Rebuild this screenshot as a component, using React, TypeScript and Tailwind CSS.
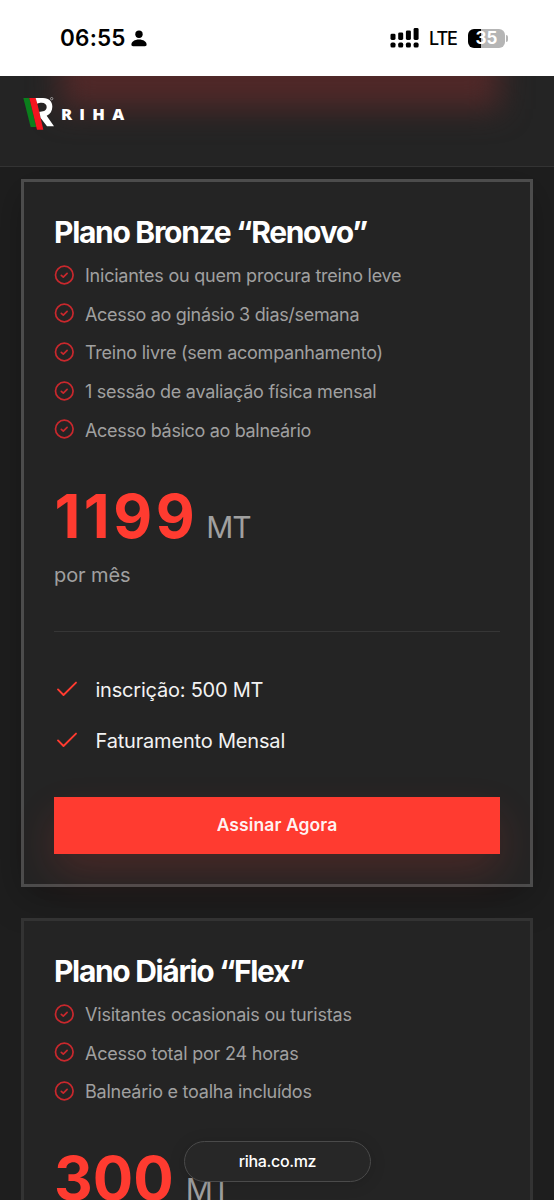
import { ReactNode } from "react";

interface Feature {
    text: string;
    tracking: string;
}

interface PlanCardProps {
    title: string;
    titleClass: string;
    features: Feature[];
    price: string;
    priceClass: string;
    period: string;
    highlighted?: boolean;
    children?: ReactNode;
}

const bronzeFeatures: Feature[] = [
    { text: "Iniciantes ou quem procura treino leve", tracking: "tracking-[-0.23px]" },
    { text: "Acesso ao ginásio 3 dias/semana", tracking: "tracking-[-0.32px]" },
    { text: "Treino livre (sem acompanhamento)", tracking: "tracking-[-0.25px]" },
    { text: "1 sessão de avaliação física mensal", tracking: "tracking-[-0.26px]" },
    { text: "Acesso básico ao balneário", tracking: "tracking-[-0.33px]" },
];

const flexFeatures: Feature[] = [
    { text: "Visitantes ocasionais ou turistas", tracking: "tracking-[-0.2px]" },
    { text: "Acesso total por 24 horas", tracking: "tracking-[-0.22px]" },
    { text: "Balneário e toalha incluídos", tracking: "tracking-[-0.24px]" },
];

const extras: Feature[] = [
    { text: "inscrição: 500 MT", tracking: "tracking-[-0.22px]" },
    { text: "Faturamento Mensal", tracking: "tracking-[-0.18px]" },
];

function StatusBar() {
    return (
        <div className="relative z-10 flex h-[76px] shrink-0 items-center justify-between bg-white pl-[60px] pr-[46px] text-black">
            <div className="flex items-center gap-[5px]">
                <span className="text-[22.5px] font-semibold leading-none tracking-[0.2px]">06:55</span>
                <svg width="16" height="17" viewBox="0 0 16 17" fill="currentColor">
                    <circle cx="8" cy="4.2" r="3.7" />
                    <path d="M0.4 14.6C0.4 11.6 3.6 9.4 8 9.4s7.6 2.2 7.6 5.2c0 1.1-.6 1.7-1.7 1.7H2.1C1 16.3.4 15.7.4 14.6Z" />
                </svg>
            </div>
            <div className="flex items-center">
                <svg width="29" height="20" viewBox="0 0 29 20" fill="currentColor">
                    <rect x="0.5" y="5.7" width="5" height="6.2" rx="1.4" />
                    <rect x="8.2" y="4.4" width="5" height="7.5" rx="1.4" />
                    <rect x="15.9" y="2.4" width="5" height="9.5" rx="1.4" />
                    <rect x="23.6" y="0.1" width="5" height="11.8" rx="1.4" />
                    <rect x="0.5" y="14.6" width="5" height="5" rx="1.6" />
                    <rect x="8.2" y="14.6" width="5" height="5" rx="1.6" />
                    <rect x="15.9" y="14.6" width="5" height="5" rx="1.6" />
                    <rect x="23.6" y="14.6" width="5" height="5" rx="1.6" />
                </svg>
                <span className="ml-[10px] mt-[2px] w-[39px] text-[18px] font-medium leading-none tracking-[-1.1px]">LTE</span>
                <div className="flex h-[19px] w-[37px] items-center justify-center rounded-[6px] bg-[linear-gradient(90deg,#000_35%,#b5b5b5_35%)]">
                    <span className="text-[17px] font-bold leading-none text-white">35</span>
                </div>
                <span className="ml-px h-[7px] w-[2px] rounded-r-full bg-[#b5b5b5]" />
            </div>
        </div>
    );
}

function Logo() {
    return (
        <div className="flex items-center">
            <svg width="32" height="33" viewBox="0 0 96 99">
                <path d="M1 3h18l21 87H23Z" fill="#0a7f1c" />
                <path d="M19 3h20l22 95H42Z" fill="#f5151f" />
                <path
                    d="M38 3h22c19 0 28 11 28 26 0 12-6 22-17 27l22 32H72L53 63l-4-19c14 1 22-5 22-14 0-8-6-13-15-13-5 0-10 1-13 3Z"
                    fill="#fff"
                />
                <circle cx="86" cy="5" r="3.6" fill="none" stroke="#ccc" strokeWidth="2" />
            </svg>
            <span className="ml-[6px] mt-[1px] font-['Open_Sans',sans-serif] text-[16.5px] font-extrabold leading-none tracking-[7.2px] text-white">
                RIHA
            </span>
        </div>
    );
}

function CircleCheck() {
    return (
        <svg className="-mt-px" width="20" height="20" viewBox="0 0 20 20" fill="none" stroke="#c9282d" strokeWidth="1.7">
            <circle cx="10.3" cy="10" r="8.8" />
            <path d="M7.3 10.3l2 1.8 3.8-3.7" strokeLinecap="round" strokeLinejoin="round" />
        </svg>
    );
}

function PlanCard({ title, titleClass, features, price, priceClass, period, highlighted, children }: PlanCardProps) {
    return (
        <section
            className={
                highlighted
                    ? "h-[708px] shrink-0 border-[3px] border-[#4c4c4c] bg-[#242424] px-[30px] pt-[29px] shadow-[0_10px_36px_rgba(0,0,0,0.25)]"
                    : "h-[708px] shrink-0 border-[3px] border-[#333] bg-[#242424] px-[30px] pt-[29px]"
            }
        >
            <h2 className={`h-[45px] whitespace-nowrap text-[30px] font-bold leading-[43px] text-white ${titleClass}`}>
                {title}
            </h2>
            <ul>
                {features.map((feature) => (
                    <li key={feature.text} className="flex h-[38.6px] items-center gap-[11px]">
                        <CircleCheck />
                        <span className={`mt-[2px] whitespace-nowrap text-[18px] leading-none text-[#a0a0a0] ${feature.tracking}`}>
                            {feature.text}
                        </span>
                    </li>
                ))}
            </ul>
            <div className="mt-[37px] flex items-baseline whitespace-nowrap">
                <span className={`text-[60px] font-bold leading-[60px] text-[#ff3b30] ${priceClass}`}>{price}</span>
                <span className="ml-[12px] text-[30px] leading-none tracking-[-1px] text-[#a0a0a0]">MT</span>
            </div>
            <p className="mt-[15px] text-[20px] leading-[28px] tracking-[-0.1px] text-[#a0a0a0]">{period}</p>
            {children}
        </section>
    );
}

function App() {
    return (
        <div className="relative flex h-[1200px] w-[554px] flex-col overflow-hidden bg-[#1e1e1e] font-[Inter,sans-serif]">
            <StatusBar />
            <header className="relative h-[91px] shrink-0 overflow-hidden border-b border-[#333] bg-[#242424] pl-[23px] pt-[21px]">
                {/* blurred call to action showing through the bar */}
                <div className="absolute -top-10 left-[60px] h-[73px] w-[440px] bg-[#502828] blur-[15px]" />
                <div className="relative">
                    <Logo />
                </div>
            </header>

            <main className="flex flex-col gap-[31px] px-[21px] pt-[12px]">
                <PlanCard
                    title="Plano Bronze “Renovo”"
                    titleClass="tracking-[-1.3px]"
                    features={bronzeFeatures}
                    price="1199"
                    priceClass="tracking-[3.5px] ml-[0.5px] -mr-[4px]"
                    period="por mês"
                    highlighted
                >
                    <div className="mt-[42px] border-t border-[#363636]" />
                    <ul className="mt-[32px]">
                        {extras.map((extra) => (
                            <li key={extra.text} className="flex h-[51.5px] items-center">
                                <svg width="26" height="20" viewBox="0 0 26 20" fill="none" stroke="#ff3b30" strokeWidth="1.9">
                                    <path d="M4 9.4l5.5 5.6L22 2.6" strokeLinecap="round" strokeLinejoin="round" />
                                </svg>
                                <span className={`ml-[15.5px] whitespace-nowrap text-[20px] leading-none text-[#f2f2f2] ${extra.tracking}`}>
                                    {extra.text}
                                </span>
                            </li>
                        ))}
                    </ul>
                    <button className="relative mt-[30px] h-[57px] w-full bg-[#ff3b30] text-[17.5px] font-semibold tracking-[0.1px] text-white/95 shadow-[0_18px_42px_-2px_rgba(255,59,48,0.18)]">
                        Assinar Agora
                    </button>
                </PlanCard>

                <PlanCard
                    title="Plano Diário “Flex”"
                    titleClass="tracking-[-1.33px]"
                    features={flexFeatures}
                    price="300"
                    priceClass="tracking-normal"
                    period="por dia"
                />
            </main>

            {/* browser address pill */}
            <div className="absolute left-[184px] top-[1141px] flex h-[41px] w-[187px] items-center justify-center rounded-full border border-[#4a4a4a] bg-[#272727] pb-[2px] text-[16px] font-medium tracking-[-0.35px] text-white shadow-[0_2px_16px_rgba(0,0,0,0.15)]">
                riha.co.mz
            </div>
        </div>
    );
}

export default App;
